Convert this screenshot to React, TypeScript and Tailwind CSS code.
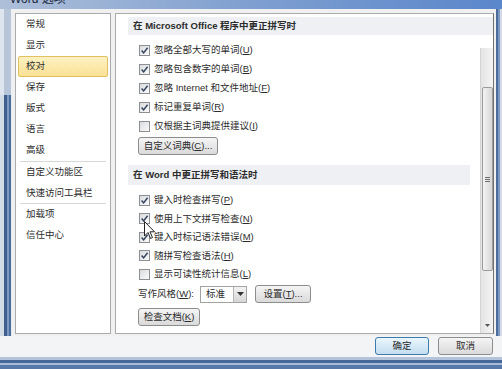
const font = "font-['Liberation_Sans','Noto_Sans_CJK_SC',sans-serif]";

const Check = ({ on = true }: { on?: boolean }) => (
  <span className="w-[11px] h-[11px] shrink-0 border border-[#8c8f93] bg-linear-to-br from-[#d9dbde] to-[#fbfbfb] flex items-center justify-center">
    {on && (
      <svg width="9" height="9" viewBox="0 0 9 9">
        <path d="M1.6 4.6 L3.6 6.9 L7.6 1.7" stroke="#34435e" strokeWidth="1.5" fill="none" />
      </svg>
    )}
  </span>
);

const Row = ({ on = true, h, children }: { on?: boolean; h: string; children: React.ReactNode }) => (
  <div className={`${h} flex items-center gap-[4px] pl-[23px]`}>
    <Check on={on} />
    <span>{children}</span>
  </div>
);

const Btn = ({ w, children, primary }: { w: string; children: React.ReactNode; primary?: boolean }) => (
  <div
    className={`${w} h-[18px] shrink-0 rounded-[3px] border flex items-center justify-center ${
      primary
        ? "border-[#3d7bad] bg-linear-to-b from-[#eaf6fd] to-[#c4def0]"
        : "border-[#8d8d8d] bg-linear-to-b from-[#f5f5f5] to-[#dadada]"
    }`}
  >
    {children}
  </div>
);

const navTop = ["常规", "显示", "校对", "保存", "版式", "语言", "高级"];

export default function App() {
  return (
    <div className={`w-[502px] h-[369px] flex flex-col overflow-hidden bg-[#eef1f5] text-[9.5px] text-[#2c2c2c] ${font}`}>
      {/* title bar, cut off at the top */}
      <div className="h-[9px] shrink-0 flex items-end overflow-hidden bg-linear-to-r from-[#aebfd9] via-[#7f9fd0] to-[#5a86cb] pl-[10px] pb-[4px]">
        <span className="text-[12px] leading-[12px] text-[#1c2a40]">Word 选项</span>
      </div>

      <div className="flex h-[327px] shrink-0">
        {/* left frame */}
        <div className="w-[12px] flex flex-col shrink-0">
          <div className="h-[86px] flex">
            <div className="w-[4px] bg-[#dfe5ee]" />
            <div className="w-[7px] bg-[#b7c5d9]" />
            <div className="w-[1px] bg-[#eef1f5]" />
          </div>
          <div className="flex-1 flex">
            <div className="w-[4px] bg-[#d3dbe7]" />
            <div className="w-[3px] bg-[#3f5f8e]" />
            <div className="w-[2px] bg-[#7d98c2]" />
            <div className="w-[2px] bg-[#4b6b9b]" />
            <div className="w-[1px] bg-[#e6ebf2]" />
          </div>
        </div>

        <div className="flex-1 flex gap-[4px] pt-[4px] pl-[3px] bg-[#f0f0f0]">
          {/* nav panel */}
          <div className="w-[96px] h-[321px] border border-[#a9abad] bg-white flex flex-col">
            {navTop.map((t) => (
              <div
                key={t}
                className={`mx-[2px] h-[21px] px-[7px] flex items-center rounded-[2px] border ${
                  t === "校对"
                    ? "border-[#e2bf5f] bg-linear-to-b from-[#fdf1c2] to-[#fbe193]"
                    : "border-transparent"
                }`}
              >
                {t}
              </div>
            ))}
            <div className="mx-[4px] h-px bg-[#d8d8d8]" />
            {["自定义功能区", "快速访问工具栏"].map((t) => (
              <div key={t} className="mx-[2px] h-[20.5px] px-[8px] flex items-center">
                {t}
              </div>
            ))}
            <div className="mx-[4px] h-px bg-[#d8d8d8]" />
            {["加载项", "信任中心"].map((t) => (
              <div key={t} className="mx-[2px] h-[20.5px] px-[8px] flex items-center">
                {t}
              </div>
            ))}
          </div>

          {/* settings panel */}
          <div className="w-[379px] h-[321px] border border-[#a9abad] border-r-[#707070] bg-white flex flex-col">
            <div className="ml-[12px] mt-[3px] h-[18px] shrink-0 bg-[#eef0f3] flex items-center pl-[5px] font-bold">
              在 Microsoft Office 程序中更正拼写时
            </div>
            <div className="flex flex-1">
              <div className="flex-1 flex flex-col pt-[6px]">
                <Row h="h-[19px]">忽略全部大写的单词(<u>U</u>)</Row>
                <Row h="h-[19px]">忽略包含数字的单词(<u>B</u>)</Row>
                <Row h="h-[19px]">忽略 Internet 和文件地址(<u>F</u>)</Row>
                <Row h="h-[19px]">标记重复单词(<u>R</u>)</Row>
                <Row h="h-[19px]" on={false}>仅根据主词典提供建议(<u>I</u>)</Row>
                <div className="ml-[22px] mt-[1px]">
                  <Btn w="w-[80px]">自定义词典(<u>C</u>)...</Btn>
                </div>
                <div className="ml-[12px] mr-[10px] mt-[10px] h-[20px] bg-[#eef0f3] flex items-center pl-[5px] font-bold">
                  在 Word 中更正拼写和语法时
                </div>
                <div className="pt-[6px]">
                  <Row h="h-[18.5px]">键入时检查拼写(<u>P</u>)</Row>
                  <Row h="h-[18.5px]">使用上下文拼写检查(<u>N</u>)</Row>
                  <Row h="h-[18.5px]">键入时标记语法错误(<u>M</u>)</Row>
                  <Row h="h-[18.5px]">随拼写检查语法(<u>H</u>)</Row>
                  <Row h="h-[18.5px]" on={false}>显示可读性统计信息(<u>L</u>)</Row>
                </div>
                <div className="mt-[1.5px] h-[18px] flex items-center pl-[22px]">
                  <span className="w-[62px]">写作风格(<u>W</u>):</span>
                  <div className="w-[47px] h-[17px] border border-[#a3a3a3] flex bg-white">
                    <span className="flex-1 flex items-center pl-[5px]">标准</span>
                    <span className="w-[13px] border-l border-[#b5b5b5] bg-linear-to-b from-[#f2f2f2] to-[#d6d6d6] flex items-center justify-center">
                      <svg width="7" height="4" viewBox="0 0 7 4">
                        <path d="M0 0 H7 L3.5 4 Z" fill="#333" />
                      </svg>
                    </span>
                  </div>
                  <div className="ml-[8px]">
                    <Btn w="w-[56px]">设置(<u>T</u>)...</Btn>
                  </div>
                </div>
                <div className="ml-[22px] mt-[5px]">
                  <Btn w="w-[62px]">检查文档(<u>K</u>)</Btn>
                </div>
              </div>

              {/* scrollbar */}
              <div className="w-[13px] mt-[13px] border-l border-[#d4d4d4] bg-linear-to-r from-[#e4e4e4] to-[#f4f4f4] flex flex-col items-center">
                <div className="mt-[39px] w-[11px] h-[184px] rounded-[2px] border border-[#9c9c9c] bg-linear-to-r from-[#f3f3f3] to-[#d7d7d7] flex flex-col items-center justify-center gap-[1px]">
                  <div className="w-[5px] h-px bg-[#6e6e6e]" />
                  <div className="w-[5px] h-px bg-[#6e6e6e]" />
                  <div className="w-[5px] h-px bg-[#6e6e6e]" />
                </div>
                <div className="flex-1" />
                <svg width="5" height="3" viewBox="0 0 5 3" className="mb-[6px]">
                  <path d="M0 0 H5 L2.5 3 Z" fill="#555" />
                </svg>
              </div>
            </div>
          </div>
        </div>

        {/* right frame */}
        <div className="w-[6px] shrink-0 flex">
          <div className="w-[2px] bg-[#4b6b9b]" />
          <div className="w-[2px] bg-[#7d98c2]" />
          <div className="w-[2px] bg-[#d3dbe7]" />
        </div>
      </div>

      {/* button bar */}
      <div className="h-[21px] shrink-0 bg-[#f3f4f6] flex justify-end gap-[9px] pr-[9px] pt-[1px]">
        <Btn w="w-[54px]" primary>确定</Btn>
        <Btn w="w-[55px]">取消</Btn>
      </div>

      {/* bottom frame */}
      <div className="h-[12px] shrink-0 flex flex-col">
        <div className="h-[3px] bg-[#b3c3da]" />
        <div className="h-[3px] bg-[#45679a]" />
        <div className="h-[2px] bg-[#a9bbd6]" />
        <div className="h-[4px] bg-[#5777a8]" />
      </div>

      {/* mouse pointer */}
      <svg width="12" height="19" viewBox="0 0 12 19" className="absolute left-[144px] top-[221px]">
        <path d="M0.5 0.5 V15 L4 11.5 L6.5 17.5 L8.5 16.6 L6 10.8 H10.5 Z" fill="#fff" stroke="#222" strokeWidth="1" />
      </svg>
    </div>
  );
}
